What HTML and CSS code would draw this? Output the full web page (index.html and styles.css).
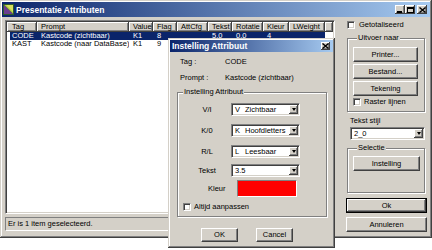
FILE: index.html
```html
<!DOCTYPE html>
<html>
<head>
<meta charset="utf-8">
<title>Presentatie Attributen</title>
<link rel="stylesheet" href="styles.css">
</head>
<body>
<div class="window">
  <div class="titlebar">
    <svg class="appicon" width="11" height="11" viewBox="0 0 11 11">
      <rect x="0" y="0" width="11" height="11" fill="#2f5d2a"/>
      <polygon points="1,1 10,1 10,10" fill="#a8c83a"/>
      <polygon points="1,1 1,10 10,10" fill="#6b3d8f"/>
      <polygon points="3,1 10,1 10,8" fill="#d8e060"/>
    </svg>
    <span class="title">Presentatie Attributen</span>
    <div class="tbtns">
      <span class="tb"><svg width="6" height="6" viewBox="0 0 6 6"><rect x="0" y="4" width="5" height="2" fill="#000"/></svg></span>
      <span class="tb"><svg width="7" height="6" viewBox="0 0 7 6"><rect x="0.5" y="0.5" width="6" height="5" fill="none" stroke="#000"/><rect x="0" y="0" width="7" height="2" fill="#000"/></svg></span>
      <span class="tb close"><svg width="7" height="6" viewBox="0 0 7 6"><path d="M0.5 0.5 L6.5 5.5 M6.5 0.5 L0.5 5.5" stroke="#000" stroke-width="1.4"/></svg></span>
    </div>
  </div>
  <div class="main">
    <div class="leftcol">
      <div class="list">
        <div class="lhead">
          <span class="hc w-tag">Tag</span>
          <span class="hc w-prompt">Prompt</span>
          <span class="hc w-value">Value</span>
          <span class="hc w-flag">Flag</span>
          <span class="hc w-att">AttCfg</span>
          <span class="hc w-tekst">Tekst</span>
          <span class="hc w-rot">Rotatie</span>
          <span class="hc w-kleur">Kleur</span>
          <span class="hc w-lw">LWeight</span>
          <span class="hc w-rest"></span>
        </div>
        <div class="row sel">
          <span class="cell first">CODE</span>
          <span class="cell w-prompt">Kastcode (zichtbaar)</span>
          <span class="cell w-value">K1</span>
          <span class="cell w-flag">8</span>
          <span class="cell w-att"></span>
          <span class="cell w-tekst">5.0</span>
          <span class="cell w-rot">0.0</span>
          <span class="cell w-kleur">4</span>
          <span class="cell w-lw"></span>
        </div>
        <div class="row">
          <span class="cell first">KAST</span>
          <span class="cell w-prompt">Kastcode (naar DataBase)</span>
          <span class="cell w-value">K1</span>
          <span class="cell w-flag">9</span>
        </div>
      </div>
      <div class="status">Er is 1 item geselecteerd.</div>
    </div>
    <div class="rightcol">
      <div class="chkrow top-chk"><span class="chk"></span><span class="chklabel">Getotaliseerd</span></div>
      <fieldset class="grp grp-out">
        <legend>Uitvoer naar</legend>
        <div class="btn side">Printer...</div>
        <div class="btn side">Bestand...</div>
        <div class="btn side">Tekening</div>
        <div class="chkrow raster"><span class="chk"></span><span class="chklabel">Raster lijnen</span></div>
      </fieldset>
      <div class="lbl-stijl">Tekst stijl</div>
      <div class="combo combo-stijl"><span class="val">2_0</span><span class="dd"><span class="arrow"></span></span></div>
      <fieldset class="grp grp-sel">
        <legend>Selectie</legend>
        <div class="btn inst">Instelling</div>
      </fieldset>
      <div class="btn big default">Ok</div>
      <div class="btn big cancel-main">Annuleren</div>
    </div>
  </div>

  <div class="dialog">
    <div class="dtitle">
      <span class="title">Instelling Attribuut</span>
      <span class="tb dclose"><svg width="7" height="6" viewBox="0 0 7 6"><path d="M0.5 0.5 L6.5 5.5 M6.5 0.5 L0.5 5.5" stroke="#000" stroke-width="1.4"/></svg></span>
    </div>
    <div class="dbody">
      <div class="info"><span class="k">Tag :</span><span>CODE</span></div>
      <div class="info second"><span class="k">Prompt :</span><span>Kastcode (zichtbaar)</span></div>
      <fieldset class="grp grp-attr">
        <legend>Instelling Attribuut</legend>
        <div class="frow r1"><span class="flabel">V/I</span><div class="combo fcombo"><span class="val"><span class="code">V</span>Zichtbaar</span><span class="dd"><span class="arrow"></span></span></div></div>
        <div class="frow r2"><span class="flabel">K/0</span><div class="combo fcombo"><span class="val"><span class="code">K</span>Hoofdletters</span><span class="dd"><span class="arrow"></span></span></div></div>
        <div class="frow r3"><span class="flabel">R/L</span><div class="combo fcombo"><span class="val"><span class="code">L</span>Leesbaar</span><span class="dd"><span class="arrow"></span></span></div></div>
        <div class="frow r4"><span class="flabel">Tekst</span><div class="combo fcombo"><span class="val">3.5</span><span class="dd"><span class="arrow"></span></span></div></div>
        <div class="frow r5"><span class="flabel kleur">Kleur</span><div class="swatch"></div></div>
        <div class="chkrow altijd"><span class="chk"></span><span class="chklabel">Altijd aanpassen</span></div>
      </fieldset>
      <div class="dbtns">
        <div class="btn dbtn">OK</div>
        <div class="btn dbtn">Cancel</div>
      </div>
    </div>
  </div>
</div>
</body>
</html>
```
FILE: styles.css
```css
* { box-sizing: border-box; }
html { background: #fff; }
body {
  margin: 0;
  min-height: 250px;
  background: #fff;
  font-family: "Liberation Sans", Arial, sans-serif;
  font-size: 7.5px;
  color: #000;
}
.window {
  position: relative;
  width: 432px;
  height: 238px;
  padding: 2px;
  background: #d4d0c8;
  box-shadow: inset -1px -1px #404040, inset 1px 1px #d4d0c8, inset -2px -2px #808080, inset 2px 2px #fff;
}
.titlebar {
  height: 15px;
  display: flex;
  align-items: center;
  background: linear-gradient(90deg, #0a246a, #a6caf0);
  padding: 0 3px 0 1px;
}
.appicon { display: block; }
.title {
  margin-left: 2px;
  color: #fff;
  font-weight: bold;
  font-size: 8.5px;
  white-space: nowrap;
}
.tbtns { margin-left: auto; display: flex; align-items: center; }
.tb {
  width: 10px;
  height: 9px;
  background: #d4d0c8;
  box-shadow: inset -1px -1px #404040, inset 1px 1px #fff, inset -2px -2px #808080;
  display: flex;
  align-items: center;
  justify-content: center;
}
.tb svg { display: block; }
.tb.close { margin-left: 2px; }

.main { display: flex; padding: 3px 0 0 3px; }
.leftcol { width: 330px; display: flex; flex-direction: column; }
.list {
  height: 194px;
  background: #fff;
  border: 1px solid;
  border-color: #808080 #fff #fff #808080;
  box-shadow: inset 1px 1px #404040, inset -1px -1px #d4d0c8;
  padding: 1px;
}
.lhead { display: flex; height: 10px; }
.hc {
  height: 10px;
  line-height: 10px;
  padding-left: 4px;
  background: #d4d0c8;
  box-shadow: inset -1px -1px #404040, inset 1px 1px #fff, inset -2px -2px #808080;
  white-space: nowrap;
  overflow: hidden;
}
.w-tag { width: 30px; padding-left: 5px; }
.w-prompt { width: 92px; }
.w-value { width: 24px; }
.w-flag { width: 24px; }
.w-att { width: 31px; }
.w-tekst { width: 24px; }
.w-rot { width: 31px; }
.w-kleur { width: 26px; }
.w-lw { width: 36px; }
.w-rest { flex: 1; }
.row { display: flex; height: 8px; line-height: 8px; white-space: nowrap; }
.cell { padding-left: 4px; overflow: hidden; height: 8px; }
.cell.first { margin-left: 3px; width: 27px; padding-left: 2px; }
.row.sel .cell { background: #0a246a; color: #fff; }
.status {
  margin-top: 3px;
  height: 14px;
  line-height: 12px;
  padding-left: 2px;
  border: 1px solid;
  border-color: #808080 #fff #fff #808080;
}

.rightcol {
  margin-left: 10px;
  width: 83px;
  display: flex;
  flex-direction: column;
  align-items: flex-start;
}
.chkrow { display: flex; align-items: center; line-height: 8px; }
.chk {
  width: 8px;
  height: 8px;
  background: #fff;
  border: 1px solid;
  border-color: #808080 #fff #fff #808080;
  box-shadow: inset 1px 1px #404040, inset -1px -1px #d4d0c8;
}
.chklabel { margin-left: 3px; white-space: nowrap; }
.top-chk { margin: 1px 0 0 2px; }
.top-chk .chklabel { margin-left: 4px; }

.grp {
  margin: 0;
  padding: 0;
  border: 1px solid #808080;
  box-shadow: inset 1px 1px #fff, 1px 1px #fff;
  min-inline-size: 0;
}
.grp legend {
  padding: 0 1px;
  margin-left: 4px;
  height: 8px;
  line-height: 8px;
  background: #d4d0c8;
  white-space: nowrap;
}
.grp-out {
  margin: 5px 0 0 2px;
  width: 78px;
  height: 78px;
  padding: 5px 0 0 5px;
}
.btn {
  height: 15px;
  line-height: 13px;
  text-align: center;
  background: #d4d0c8;
  border: 1px solid;
  border-color: #fff #404040 #404040 #fff;
  box-shadow: inset -1px -1px #808080;
  white-space: nowrap;
}
.btn.side { width: 65px; margin-bottom: 2px; }
.raster { margin-top: 1px; }
.lbl-stijl { margin: 5px 0 0 5px; line-height: 8px; }
.combo {
  display: flex;
  height: 13px;
  background: #fff;
  border: 1px solid;
  border-color: #808080 #fff #fff #808080;
  box-shadow: inset 1px 1px #404040, inset -1px -1px #d4d0c8;
  padding: 1px;
}
.combo .val { flex: 1; line-height: 9px; padding-left: 2px; white-space: nowrap; overflow: hidden; }
.combo .code { display: inline-block; width: 10px; }
.combo .dd {
  width: 9px;
  background: #d4d0c8;
  box-shadow: inset -1px -1px #404040, inset 1px 1px #fff, inset -2px -2px #808080;
  display: flex;
  align-items: center;
  justify-content: center;
}
.arrow {
  width: 0;
  height: 0;
  border-left: 2.5px solid transparent;
  border-right: 2.5px solid transparent;
  border-top: 3px solid #000;
}
.combo-stijl { margin: 2px 0 0 5px; width: 75px; }
.grp-sel {
  margin: 4px 0 0 2px;
  width: 78px;
  height: 49px;
  padding: 4px 0 0 5px;
}
.btn.inst { width: 67px; }
.btn.big { width: 81px; margin-left: 1px; }
.btn.default {
  margin-top: 5px;
  border-color: #000;
  box-shadow: inset -1px -1px #404040, inset 1px 1px #fff, inset -2px -2px #808080;
}
.btn.cancel-main { margin-top: 4px; }

.dialog {
  position: absolute;
  left: 168px;
  top: 38px;
  width: 167px;
  height: 210px;
  padding: 2px;
  background: #d4d0c8;
  box-shadow: inset -1px -1px #404040, inset 1px 1px #d4d0c8, inset -2px -2px #808080, inset 2px 2px #fff;
}
.dtitle {
  height: 12px;
  display: flex;
  align-items: center;
  justify-content: space-between;
  background: linear-gradient(90deg, #0a246a, #a6caf0);
  padding: 0 3px 0 0;
}
.dclose { width: 9px; height: 8px; }
.dbody { padding: 6px 0 0 7px; }
.info { display: flex; line-height: 8px; padding-left: 3px; }
.info .k { width: 45px; }
.info.second { margin-top: 8px; }
.grp-attr {
  margin-top: 6px;
  width: 150px;
  height: 129px;
}
.grp-attr legend { margin-left: 5px; }
.frow { display: flex; align-items: center; }
.flabel { margin-left: 12px; width: 34px; text-align: center; white-space: nowrap; }
.flabel.kleur { padding-left: 18px; text-align: left; }
.fcombo { margin-left: 7px; width: 69px; }
.r1 { margin-top: 7px; }
.r2, .r3 { margin-top: 8px; }
.r4 { margin-top: 6px; }
.r5 { margin-top: 3px; }
.swatch {
  margin-left: 13px;
  width: 60px;
  height: 17px;
  background: #ff0000;
  border: 1px solid;
  border-color: #808080 #fff #fff #808080;
}
.altijd { margin: 6px 0 0 5px; }
.dbtns { display: flex; margin: 11px 0 0 24px; }
.btn.dbtn { width: 37px; height: 14px; line-height: 12px; margin-right: 18px; }
```
